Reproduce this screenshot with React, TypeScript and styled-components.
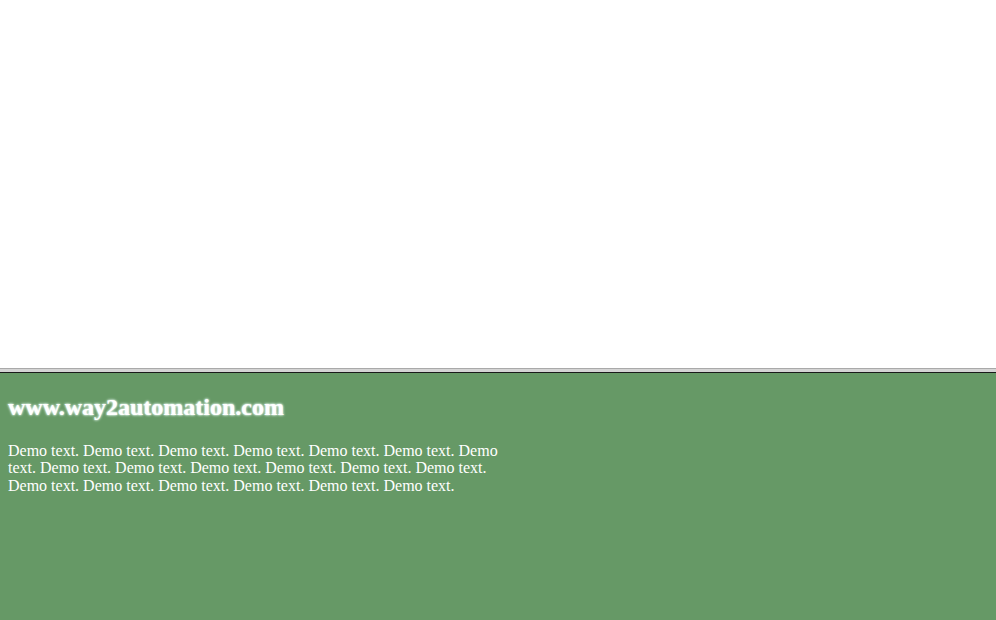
import styled, { createGlobalStyle } from "styled-components"

const GlobalStyle = createGlobalStyle`
  html, body {
    margin: 0;
    padding: 0;
    height: 100%;
  }
  #root {
    height: 100%;
  }
`

export default function App() {
  return (
    <>
      <GlobalStyle />
      <Frames>
        <TopFrame />
        <FrameBorder />
        <BottomFrame>
          <SiteTitle>www.way2automation.com</SiteTitle>
          <DemoText>
            Demo text. Demo text. Demo text. Demo text. Demo text. Demo text.
            Demo text. Demo text. Demo text. Demo text. Demo text. Demo text.
            Demo text. Demo text. Demo text. Demo text. Demo text. Demo text.
            Demo text.
          </DemoText>
        </BottomFrame>
      </Frames>
    </>
  )
}

const Frames = styled.div`
  display: flex;
  flex-direction: column;
  width: 996px;
  height: 620px;
  overflow: hidden;
`

const TopFrame = styled.div`
  height: 368px;
  flex-shrink: 0;
  background: #ffffff;
`

const FrameBorder = styled.div`
  height: 3px;
  flex-shrink: 0;
  background: #d4d4d4;
  border-top: 1px solid #a9a9a9;
  border-bottom: 1px solid #1a1a1a;
`

const BottomFrame = styled.div`
  flex: 1;
  background: #669966;
  padding: 0 8px 8px;
  color: #ffffff;
  font-family: "Liberation Serif", "Times New Roman", serif;
  line-height: 1.107;
`

const SiteTitle = styled.h2`
  font-size: 24px;
  font-weight: bold;
  margin: 21px 0 0;
  text-shadow: 0 0 3px #ffffff, 0 0 2px #ccffee;
`

const DemoText = styled.p`
  width: 500px;
  font-size: 16px;
  margin: 21px 0 0;
`
